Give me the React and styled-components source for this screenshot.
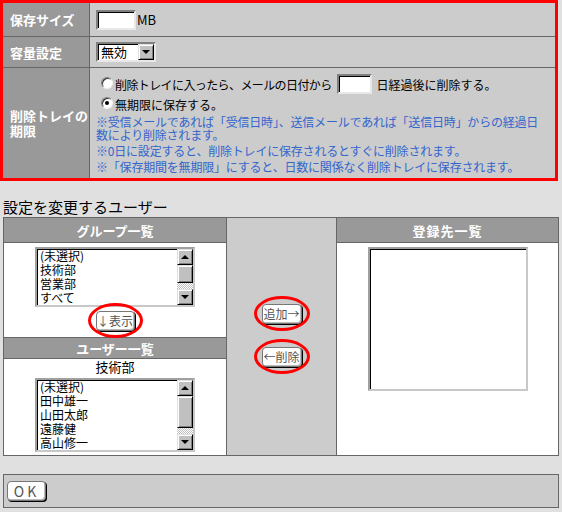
import React from 'react';
import styled, { createGlobalStyle, css } from 'styled-components';

const GlobalStyle = createGlobalStyle`
  html, body { margin: 0; padding: 0; background: #e0e0e0; }
  body { font-family: "Noto Sans CJK JP", "DejaVu Sans", sans-serif; color: #000; }
  * { box-sizing: border-box; }
`;

const Page = styled.div`
  width: 562px;
`;

/* ---------- top settings box ---------- */
const SettingsBox = styled.div`
  width: 558px;
  border: 3px solid #f00;
  display: grid;
  grid-template-columns: 86px 1fr;
  grid-template-rows: 33px 30px 110px;
  gap: 1px;
  background: #666;
`;

const LabelCell = styled.div`
  background: #999;
  color: #fff;
  font-weight: 700;
  font-size: 13px;
  line-height: 15px;
  padding-left: 7px;
  display: flex;
  align-items: center;
  white-space: nowrap;
`;

const ValueCell = styled.div`
  background: #ccc;
  padding: 0 6px;
  display: flex;
  align-items: center;
  font-size: 13px;
  ${(p) =>
    p.$stack &&
    css`
      flex-direction: column;
      align-items: stretch;
      justify-content: flex-start;
      padding: 5px 6px;
    `}
`;

const sunken = css`
  background: #fff;
  border: 2px solid;
  border-color: #808080 #e8e8e8 #e8e8e8 #808080;
  box-shadow: inset 1px 1px 0 #000;
`;

const TextBox = styled.input`
  ${sunken};
  width: ${(p) => p.$w}px;
  height: 20px;
  margin: 0 ${(p) => p.$gap || 1}px 0 ${(p) => p.$lead || 0}px;
  padding: 0;
  outline: none;
`;

const Unit = styled.span`
  font-size: 13px;
`;

const Select = styled.div`
  ${sunken};
  display: inline-flex;
  align-items: center;
  width: 60px;
  height: 20px;
  padding-left: 3px;
  font-size: 13px;
  line-height: 16px;
`;

const SelectText = styled.span`
  flex: 1;
`;

const bevel = css`
  background: #c0c0c0;
  border: 1px solid;
  border-color: #dfdfdf #000 #000 #dfdfdf;
  box-shadow: inset 1px 1px 0 #fff, inset -1px -1px 0 #808080;
`;

const ArrowButton = styled.span`
  ${bevel};
  width: 16px;
  height: 16px;
  display: flex;
  align-items: center;
  justify-content: center;
  flex-shrink: 0;
`;

const Triangle = styled.span`
  width: 0;
  height: 0;
  border-left: 4px solid transparent;
  border-right: 4px solid transparent;
  ${(p) =>
    p.$up
      ? css`border-bottom: 4px solid #000;`
      : css`border-top: 4px solid #000;`}
`;

const RadioLine = styled.div`
  display: flex;
  align-items: center;
  height: ${(p) => p.$h}px;
  font-size: 12px;
  white-space: nowrap;
`;

const Radio = styled.span`
  position: relative;
  width: 12px;
  height: 12px;
  border-radius: 50%;
  background: #fff;
  border: 1px solid;
  border-color: #808080 #f0f0f0 #f0f0f0 #808080;
  box-shadow: inset 1px 1px 0 #333;
  margin: -2px 2px 0 5px;
  flex-shrink: 0;
  ${(p) =>
    p.$checked &&
    css`
      &::after {
        content: '';
        position: absolute;
        left: 3px;
        top: 3px;
        width: 4px;
        height: 4px;
        border-radius: 50%;
        background: #000;
      }
    `}
`;

const RadioText = styled.span`
  letter-spacing: ${(p) => p.$ls || 0}px;
`;

const Notes = styled.div`
  margin-top: 2px;
`;

const Note = styled.div`
  color: #3366cc;
  font-size: 12px;
  line-height: 13px;
  letter-spacing: -0.2px;
  & + & {
    margin-top: 3px;
  }
`;

/* ---------- user section ---------- */
const SectionTitle = styled.div`
  font-size: 15px;
  line-height: 20px;
  padding: 16px 0 0 3px;
`;

const UserTable = styled.div`
  margin-left: 3px;
  width: 556px;
  height: 239px;
  border: 1px solid #666;
  background: #666;
  display: grid;
  grid-template-columns: 222px 109px 1fr;
  gap: 1px;
`;

const Column = styled.div`
  display: flex;
  flex-direction: column;
  gap: 1px;
  background: #666;
`;

const ColHeader = styled.div`
  height: ${(p) => p.$h}px;
  flex-shrink: 0;
  background: #999;
  color: #fff;
  font-weight: 700;
  font-size: 13px;
  letter-spacing: ${(p) => p.$ls || 0}px;
  display: flex;
  align-items: center;
  justify-content: center;
`;

const ColBody = styled.div`
  background: #fff;
  display: flex;
  flex-direction: column;
  align-items: center;
  padding-top: ${(p) => p.$pt || 0}px;
  gap: ${(p) => p.$gap || 0}px;
  ${(p) => (p.$h ? css`height: ${p.$h}px; flex-shrink: 0;` : css`flex: 1;`)}
`;

const MiddleColumn = styled.div`
  background: #ccc;
  display: flex;
  flex-direction: column;
  align-items: center;
  justify-content: center;
  gap: 23px;
  padding-bottom: 3px;
`;

const GroupLabel = styled.div`
  font-size: 13px;
  line-height: 16px;
  text-align: center;
`;

const ListBox = styled.div`
  width: 160px;
  height: ${(p) => p.$h}px;
  border: 2px solid;
  border-color: #a0a0a0 #c8c8c8 #c8c8c8 #a0a0a0;
  background: #fff;
  box-shadow: inset 1px 1px 0 #000;
  display: flex;
  flex-shrink: 0;
`;

const Items = styled.div`
  flex: 1;
  padding-left: 3px;
  font-size: 12px;
  line-height: 14px;
  white-space: nowrap;
`;

const Item = styled.div`
  height: 14px;
`;

const ScrollBar = styled.div`
  width: 16px;
  display: flex;
  flex-direction: column;
`;

const ScrollThumb = styled.div`
  ${bevel};
  height: ${(p) => p.$h}px;
  flex-shrink: 0;
`;

const ScrollTrack = styled.div`
  flex: 1;
  background: repeating-conic-gradient(#c0c0c0 0% 25%, #fff 0% 50%) 0 0 / 2px 2px;
`;

const Button = styled.button`
  position: relative;
  width: ${(p) => p.$w}px;
  height: 20px;
  padding: 0;
  flex-shrink: 0;
  background: #fff;
  border: 1px solid #777;
  border-radius: 4px;
  box-shadow: 1px 1px 0 #000, inset -1px -1px 0 #bbb;
  font-family: "Noto Sans CJK JP", "DejaVu Sans", sans-serif;
  font-size: ${(p) => p.$fs || 12}px;
  letter-spacing: ${(p) => p.$ls || 0}px;
  color: #555;
  line-height: 18px;
  ${(p) =>
    p.$circled &&
    css`
      &::after {
        content: '';
        position: absolute;
        top: -9px;
        right: -9px;
        bottom: -8px;
        left: -9px;
        border: 3px solid #f00;
        border-radius: 50%;
        pointer-events: none;
      }
    `}
`;

const Footer = styled.div`
  margin: 18px 0 0 3px;
  width: 556px;
  height: 34px;
  border: 1px solid #666;
  background: #ccc;
  display: flex;
  align-items: center;
  padding-left: 3px;
`;

function List({ items, height, thumb }) {
  return (
    <ListBox $h={height}>
      <Items>
        {items.map((it) => (
          <Item key={it}>{it}</Item>
        ))}
      </Items>
      {thumb ? (
        <ScrollBar>
          <ArrowButton>
            <Triangle $up />
          </ArrowButton>
          <ScrollThumb $h={thumb} />
          <ScrollTrack />
          <ArrowButton>
            <Triangle />
          </ArrowButton>
        </ScrollBar>
      ) : null}
    </ListBox>
  );
}

export default function App() {
  return (
    <Page>
      <GlobalStyle />
      <SettingsBox>
        <LabelCell>保存サイズ</LabelCell>
        <ValueCell>
          <TextBox $w={40} defaultValue="" />
          <Unit>MB</Unit>
        </ValueCell>

        <LabelCell>容量設定</LabelCell>
        <ValueCell>
          <Select>
            <SelectText>無効</SelectText>
            <ArrowButton>
              <Triangle />
            </ArrowButton>
          </Select>
        </ValueCell>

        <LabelCell>
          削除トレイの
          <br />
          期限
        </LabelCell>
        <ValueCell $stack>
          <RadioLine $h={22}>
            <Radio />
            <RadioText $ls={-0.6}>削除トレイに入ったら、メールの日付から</RadioText>
            <TextBox $w={35} $lead={5} $gap={5} defaultValue="" />
            <RadioText>日経過後に削除する。</RadioText>
          </RadioLine>
          <RadioLine $h={18}>
            <Radio $checked />
            <RadioText>無期限に保存する。</RadioText>
          </RadioLine>
          <Notes>
            <Note>
              ※受信メールであれば「受信日時」、送信メールであれば「送信日時」からの経過日数により削除されます。
            </Note>
            <Note>※0日に設定すると、削除トレイに保存されるとすぐに削除されます。</Note>
            <Note>※「保存期間を無期限」にすると、日数に関係なく削除トレイに保存されます。</Note>
          </Notes>
        </ValueCell>
      </SettingsBox>

      <SectionTitle>設定を変更するユーザー</SectionTitle>

      <UserTable>
        <Column>
          <ColHeader $h={24}>グループ一覧</ColHeader>
          <ColBody $h={94} $pt={4} $gap={4}>
            <List items={['(未選択)', '技術部', '営業部', 'すべて']} height={60} thumb={18} />
            <Button $w={39} $circled>
              ↓表示
            </Button>
          </ColBody>
          <ColHeader $h={20}>ユーザー一覧</ColHeader>
          <ColBody $gap={3}>
            <GroupLabel>技術部</GroupLabel>
            <List
              items={['(未選択)', '田中雄一', '山田太郎', '遠藤健', '高山修一']}
              height={74}
              thumb={32}
            />
          </ColBody>
        </Column>

        <MiddleColumn>
          <Button $w={40} $circled>
            追加→
          </Button>
          <Button $w={40} $circled>
            ←削除
          </Button>
        </MiddleColumn>

        <Column>
          <ColHeader $h={24} $ls={1}>
            登録先一覧
          </ColHeader>
          <ColBody $pt={4}>
            <List items={[]} height={144} />
          </ColBody>
        </Column>
      </UserTable>

      <Footer>
        <Button $w={39} $fs={14} $ls={3}>
          OK
        </Button>
      </Footer>
    </Page>
  );
}
